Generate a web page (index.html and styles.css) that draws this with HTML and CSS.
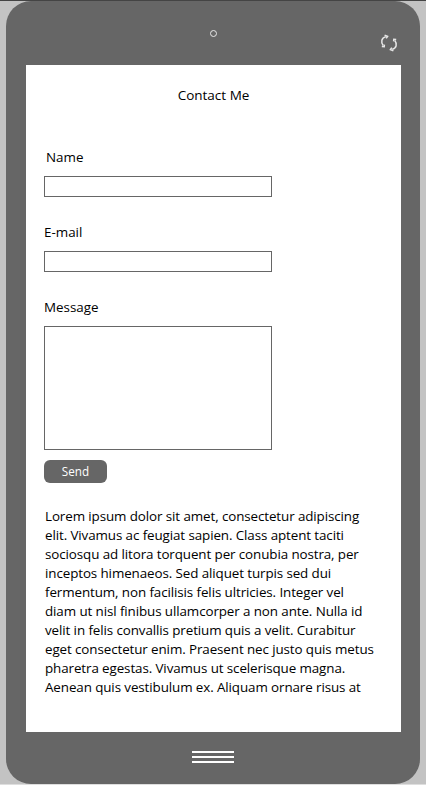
FILE: index.html
```html
<!DOCTYPE html>
<html lang="en">
<head>
<meta charset="utf-8">
<title>Contact Me</title>
<link rel="stylesheet" href="styles.css">
</head>
<body>
<main class="phone">
  <header class="phone-top">
    <span class="camera"></span>
    <svg class="rotate" viewBox="0 0 18 18" width="18" height="18" aria-hidden="true">
      <path d="M3.2 11.5C.6 8 1.4 4 5.8 2.6" />
      <path d="M4.6 1.2L7.6 2.3L6.2 4.4M1.8 12.4L4.2 12.6L4.4 10.6" />
      <path d="M14.8 6.5C17.4 10 16.6 14 12.2 15.4" />
      <path d="M13.4 16.8L10.4 15.7L11.8 13.6M16.2 5.6L13.8 5.4L13.6 7.4" />
    </svg>
  </header>
  <section class="screen">
    <h1 class="title">Contact Me</h1>
    <form class="form">
      <label class="label label-name" for="name">Name</label>
      <input class="field" id="name" type="text">
      <label class="label" for="email">E-mail</label>
      <input class="field" id="email" type="text">
      <label class="label" for="message">Message</label>
      <textarea class="field field-message" id="message"></textarea>
      <button class="send" type="button">Send</button>
    </form>
    <p class="copy">Lorem ipsum dolor sit amet, consectetur adipiscing<br>
    elit. Vivamus ac feugiat sapien. Class aptent taciti<br>
    sociosqu ad litora torquent per conubia nostra, per<br>
    inceptos himenaeos. Sed aliquet turpis sed dui<br>
    fermentum, non facilisis felis ultricies. Integer vel<br>
    diam ut nisl finibus ullamcorper a non ante. Nulla id<br>
    velit in felis convallis pretium quis a velit. Curabitur<br>
    eget consectetur enim. Praesent nec justo quis metus<br>
    pharetra egestas. Vivamus ut scelerisque magna.<br>
    Aenean quis vestibulum ex. Aliquam ornare risus at</p>
  </section>
  <footer class="phone-bottom">
    <div class="menu"><span></span><span></span><span></span></div>
  </footer>
</main>
</body>
</html>
```
FILE: styles.css
```css
* { box-sizing: border-box; }

body {
  margin: 0;
  height: 785px;
  overflow: hidden;
  padding: 0 6px;
  background: #c3c3c3;
  border-top: 1px solid #444;
  border-bottom: 1px solid #dedede;
  font-family: "Open Sans", "Noto Sans", sans-serif;
  font-size: 13.4px;
  line-height: 19px;
  color: #000;
}

.phone {
  width: 414px;
  height: 783px;
  background: #666;
  border-radius: 25px;
  padding: 0 19px 0 20px;
}

.phone-top {
  height: 64px;
  display: grid;
  grid-template-columns: 1fr auto;
  align-items: start;
}

.camera {
  width: 7px;
  height: 7px;
  border: 1.5px solid #e8e8e8;
  border-radius: 50%;
  margin: 28.5px 0 0 183.5px;
}

.rotate {
  margin: 33px 3px 0 0;
  fill: none;
  stroke: #e6e6e6;
  stroke-width: 1.5;
}

.screen {
  height: 667px;
  background: #fff;
  overflow: hidden;
  padding: 21px 18px 0;
}

.title {
  margin: 0 0 43px;
  font-size: 13.5px;
  font-weight: 400;
  text-align: center;
}

.form {
  display: flex;
  flex-direction: column;
  align-items: flex-start;
}

.label { margin-bottom: 9px; }
.label-name { padding-left: 2px; }

.field {
  width: 228px;
  height: 21px;
  margin: 0 0 26px;
  padding: 0 4px;
  border: 1px solid #666;
  border-radius: 0;
  background: #fff;
  font: inherit;
  outline: 0;
}

.field-message {
  height: 124px;
  margin-bottom: 10px;
  resize: none;
}

.send {
  width: 63px;
  height: 23px;
  padding: 0;
  border: 0;
  border-radius: 6px;
  background: #666;
  color: #fff;
  font-family: inherit;
  font-size: 11.7px;
  line-height: 23px;
}

.copy {
  margin: 24px 0 0 1px;
  letter-spacing: -0.1px;
  white-space: nowrap;
}

.phone-bottom {
  height: 52px;
  display: flex;
  justify-content: center;
  padding: 19px 1px 0 0;
}

.menu {
  width: 42px;
  margin-right: 1px;
  display: flex;
  flex-direction: column;
  gap: 3px;
}

.menu span {
  height: 2px;
  background: #fff;
}
```
